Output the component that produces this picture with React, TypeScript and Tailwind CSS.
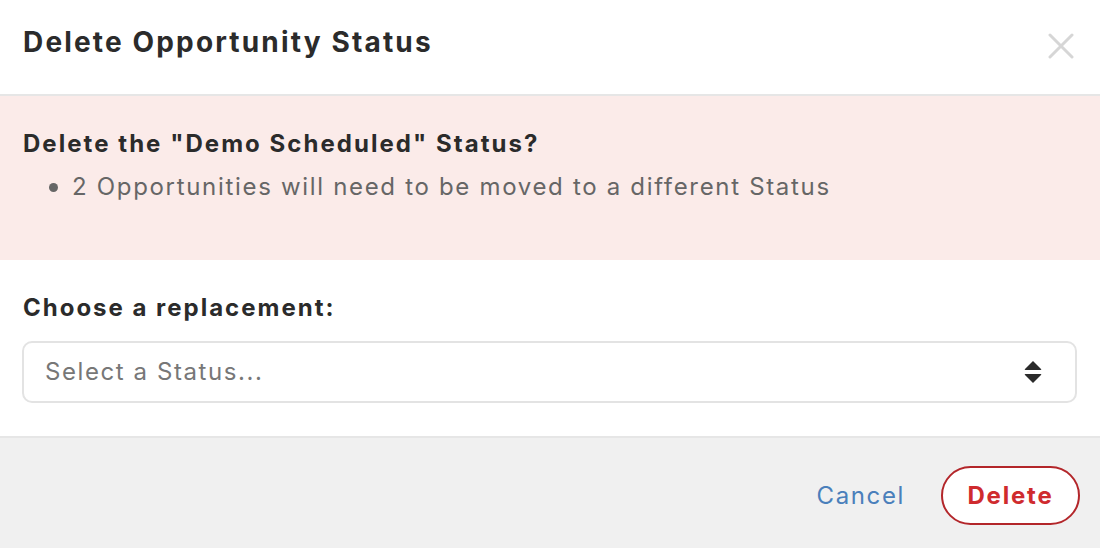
import React from "react";

export default function App() {
  return (
    <div
      className="w-[1100px] h-[548px] bg-white flex flex-col overflow-hidden text-[#2b2b2b]"
      style={{ fontFamily: "Inter, 'Noto Sans', sans-serif" }}
    >
      <div className="h-[96px] shrink-0 flex items-start justify-between pl-[23px] pr-[26px] pt-[25px] border-b-2 border-[#e6e6e6]">
        <h1 className="text-[28px] leading-[34px] font-bold tracking-[0.077em] text-[#2b2b2b]">Delete Opportunity Status</h1>
        <svg width="26" height="26" viewBox="0 0 26 26" className="mt-[8px]">
          <path d="M2 2 L24 24 M24 2 L2 24" stroke="#d6d6d6" strokeWidth="3" strokeLinecap="round" />
        </svg>
      </div>
      <div className="h-[164px] shrink-0 bg-[#fbebe9] px-[23px] pt-[33px]">
        <div className="text-[24px] font-bold leading-[30px] tracking-[0.085em] text-[#2b2b2b]">Delete the "Demo Scheduled" Status?</div>
        <ul className="mt-[13px] pl-[26px] text-[24px] leading-[30px] tracking-[0.07em] text-[#666666]">
          <li className="flex items-center gap-[14px]">
            <span className="w-[9px] h-[9px] rounded-full bg-[#666666] inline-block" />
            <span>2 Opportunities will need to be moved to a different Status</span>
          </li>
        </ul>
      </div>
      <div className="h-[178px] shrink-0 px-[22px] pt-[33px] border-b-2 border-[#e6e6e6]">
        <div className="text-[24px] font-bold leading-[30px] tracking-[0.083em] pl-[1px] text-[#2b2b2b]">Choose a replacement:</div>
        <div className="mt-[18px] h-[62px] w-[1055px] rounded-[10px] border-2 border-[#e3e3e3] flex items-center justify-between pl-[21px] pr-[33px]">
          <span className="text-[24px] tracking-[0.066em] text-[#777777]">Select a Status...</span>
          <svg width="18" height="24" viewBox="0 0 18 24">
            <path d="M9 1 L17 9 Q18 10 16.5 10 L1.5 10 Q0 10 1 9 Z" fill="#2b2b2b" />
            <path d="M9 23 L17 15 Q18 14 16.5 14 L1.5 14 Q0 14 1 15 Z" fill="#2b2b2b" />
          </svg>
        </div>
      </div>
      <div className="flex-1 bg-[#f0f0f0] flex items-center justify-end pr-[20px] gap-[36px] pt-[5px]">
        <button className="text-[24px] text-[#4a7fbb] tracking-[0.068em]">Cancel</button>
        <button className="h-[59px] w-[139px] rounded-full border-2 border-[#b3262a] bg-white text-[24px] font-bold text-[#cf2b2e] tracking-[0.075em]">
          Delete
        </button>
      </div>
    </div>
  );
}
